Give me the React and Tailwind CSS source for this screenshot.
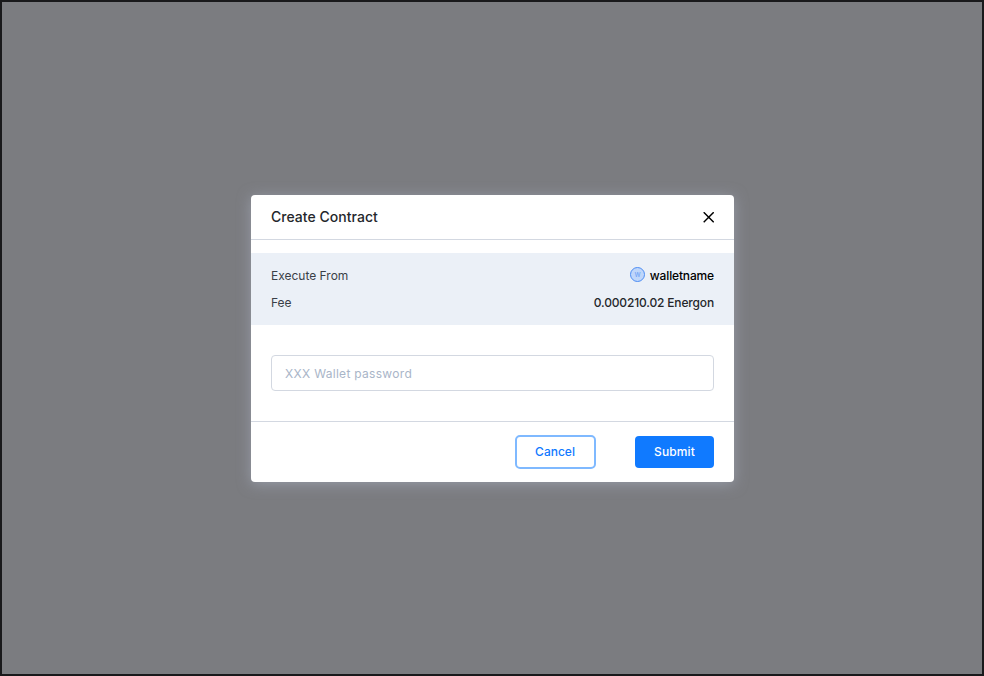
import React from "react";

function DetailRow({ label, children }) {
  return (
    <div className="flex h-[27px] items-center justify-between">
      <span className="text-[12px] text-[#3a3f47]">{label}</span>
      {children}
    </div>
  );
}

export default function App() {
  return (
    <div className="flex h-[676px] w-[984px] items-center justify-center border-2 border-[#19191b] bg-[#7b7c80] pl-px pt-px font-['Inter','Liberation_Sans',sans-serif]">
      <section className="flex h-[287px] w-[483px] flex-col rounded-[4px] bg-white shadow-[0_2px_14px_rgba(174,182,200,0.55)]">
        <header className="flex h-[45px] shrink-0 items-center justify-between border-b border-[#d3d8e1] px-5">
          <h1 className="text-[14px] font-medium leading-5 tracking-[0.03px] text-[#24272b]">Create Contract</h1>
          <button aria-label="Close" className="flex size-[11px] items-center justify-center">
            <svg width="11" height="11" viewBox="0 0 11 11" fill="none" stroke="#000" strokeWidth="1.4">
              <path d="M.7.2l10 10M10.7.2L.7 10.2" />
            </svg>
          </button>
        </header>
        <div className="mt-[13px] h-[72px] shrink-0 bg-[#ebf0f7] px-5 pt-[9px]">
          <DetailRow label="Execute From">
            <span className="flex items-center gap-[5px] text-[12px] font-medium tracking-[-0.15px] text-black">
              <svg className="-mt-0.5" width="15" height="15" viewBox="0 0 15 15">
                <circle cx="7.5" cy="7.5" r="7" fill="#bfd6fa" stroke="#4c8cf3" />
                <text x="7.5" y="10" textAnchor="middle" fontSize="7.5" fontWeight="400" fill="#6b9ff5">w</text>
              </svg>
              <span>walletname</span>
            </span>
          </DetailRow>
          <DetailRow label="Fee">
            <span className="text-[12px] font-medium tracking-[-0.16px] text-[#24272b]">0.000210.02 Energon</span>
          </DetailRow>
        </div>
        <div className="px-5 pt-[30px]">
          <input
            type="text"
            placeholder="XXX Wallet password"
            className="block h-9 w-full rounded-[4px] border border-[#d3d8e1] px-[13px] pt-px text-[12px] tracking-[0.3px] outline-none placeholder:text-[#a9b5c8]"
          />
        </div>
        <footer className="mt-[30px] flex flex-1 items-center justify-end gap-[39px] border-t border-[#d3d8e1] px-5 text-[12px] font-medium">
          <button className="h-[34px] w-[81px] rounded-[5px] border-2 border-[#7fb9ff] pr-px text-[#1079ff]">Cancel</button>
          <button className="h-8 w-[79px] rounded-[4px] bg-[#107aff] tracking-[0.1px] text-white">Submit</button>
        </footer>
      </section>
    </div>
  );
}
